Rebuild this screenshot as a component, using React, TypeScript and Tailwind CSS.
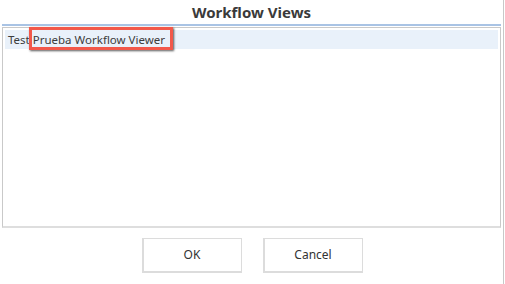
import React from 'react';

const font = { fontFamily: '"Segoe UI", "Noto Sans", "Open Sans", sans-serif' };

const App: React.FC = () => {
  return (
    <div className="w-[505px] h-[284px] bg-white relative overflow-hidden text-[#333]" style={font}>
      <div className="h-full w-[504px] border-r border-[#c8c8c8] flex flex-col">
        <div className="h-[24px] flex items-center justify-center">
          <h1 className="text-[15px] font-bold text-[#3a3a3a] leading-none pt-[1px]">Workflow Views</h1>
        </div>
        <div className="mx-[2px] h-[2px] bg-[#a9c3e4]" />
        <div className="mx-[2px] mt-[1px] h-[201px] border border-[#c9c9c9] border-b-2 border-b-[#dedede] px-[2px] pt-[2px]">
          <div className="h-[19px] bg-[#e9f1fa] flex items-center pl-[3px] text-[11.5px] text-[#3c3c3c]">
            <span>Test</span>
            <span className="relative ml-[3px]">
              Prueba Workflow Viewer
              <span className="absolute -left-[4px] -top-[4px] w-[144px] h-[23px] border-[3px] border-[#f2584a] shadow-[1px_1px_2px_rgba(0,0,0,0.65)]" />
            </span>
          </div>
        </div>
        <div className="flex justify-center gap-[21px] mt-[10px] pl-[1px]">
          <button className="w-[100px] h-[35px] bg-white border border-[#dcdcdc] border-l-2 border-b-2 text-[12px] text-[#333]">
            OK
          </button>
          <button className="w-[100px] h-[35px] bg-white border border-[#dcdcdc] border-l-2 border-b-2 text-[12px] text-[#333]">
            Cancel
          </button>
        </div>
      </div>
    </div>
  );
};

export default App;
